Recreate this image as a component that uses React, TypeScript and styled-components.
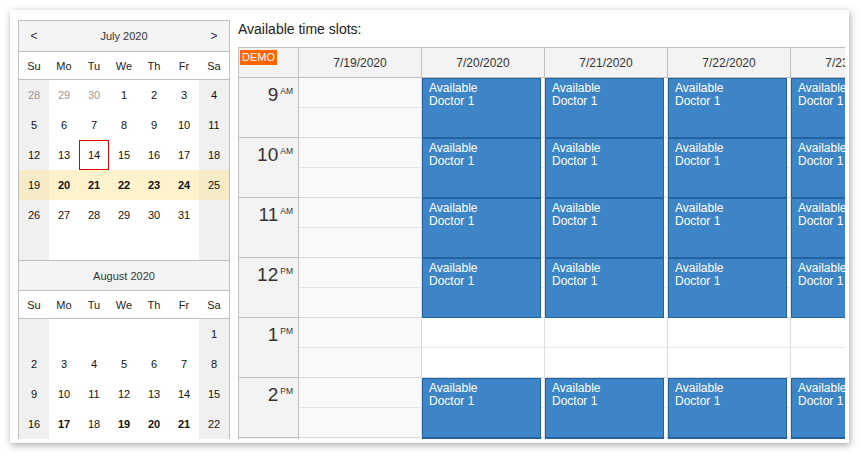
import styled, { createGlobalStyle } from 'styled-components';

const GlobalStyle = createGlobalStyle`
  html, body {
    margin: 0;
    padding: 0;
    background: #ffffff;
  }
  body {
    font-family: "Liberation Sans", Arial, sans-serif;
  }
  * {
    box-sizing: border-box;
  }
`;

const Page = styled.div`
  width: 860px;
  height: 455px;
  padding: 10px 0 0 10px;
`;

const Frame = styled.div`
  width: 839px;
  height: 433px;
  padding: 10px 4px 4px 8px;
  background: #ffffff;
  box-shadow: 1px 2px 7px rgba(0, 0, 0, 0.35);
`;

const Content = styled.div`
  display: flex;
  gap: 8px;
  width: 100%;
  height: 100%;
  overflow: hidden;
`;

/* ---------- navigator ---------- */

const Navigator = styled.div`
  flex-shrink: 0;
  align-self: flex-start;
  width: 212px;
  border: 1px solid #c0c0c0;
  color: #222;
  font-size: 11px;
`;

const MonthHeader = styled.div<{ $first?: boolean }>`
  display: grid;
  grid-template-columns: 30px 1fr 30px;
  height: 31px;
  align-items: center;
  background: #f3f3f3;
  border-top: ${(p) => (p.$first ? 'none' : '1px solid #c0c0c0')};
  border-bottom: 1px solid #c0c0c0;
  color: #333;
  text-align: center;
`;

const NavArrow = styled.span`
  font-size: 12px;
  color: #333;
`;

const DayNames = styled.div`
  display: grid;
  grid-template-columns: repeat(7, 30px);
  height: 28px;
  align-items: center;
  text-align: center;
  border-bottom: 1px solid #c0c0c0;
  background: #fff;
`;

const Weeks = styled.div`
  display: grid;
  grid-template-columns: repeat(7, 30px);
  grid-auto-rows: 30px;
`;

const DayCell = styled.div<{
  $weekend: boolean;
  $selected: boolean;
  $other?: boolean;
  $bold?: boolean;
  $today?: boolean;
}>`
  display: flex;
  align-items: center;
  justify-content: center;
  background: ${(p) =>
    p.$selected ? (p.$weekend ? '#f5ebc7' : '#fdf2cc') : p.$weekend ? '#f0f0f0' : '#ffffff'};
  color: ${(p) => (p.$other ? '#999' : '#111')};
  font-weight: ${(p) => (p.$bold ? 700 : 400)};
  border: ${(p) => (p.$today ? '1px solid #e00000' : 'none')};
`;

type Day = { d: number; other?: boolean; bold?: boolean; today?: boolean } | null;

const names = ['Su', 'Mo', 'Tu', 'We', 'Th', 'Fr', 'Sa'];

const range = (a: number, b: number, bold: number[] = []): Day[] =>
  Array.from({ length: b - a + 1 }, (_, i) => ({ d: a + i, bold: bold.includes(a + i) }));

const july: Day[][] = [
  [{ d: 28, other: true }, { d: 29, other: true }, { d: 30, other: true }, ...range(1, 4)],
  range(5, 11),
  [...range(12, 13), { d: 14, today: true }, ...range(15, 18)],
  range(19, 25, [20, 21, 22, 23, 24]),
  [...range(26, 31), null],
  [null, null, null, null, null, null, null],
];

// only the weeks that fit in the frame
const august: Day[][] = [
  [null, null, null, null, null, null, { d: 1 }],
  range(2, 8),
  range(9, 15),
  range(16, 22, [17, 19, 20, 21]),
];

const Month = ({
  title,
  weeks,
  nav,
  selectedRow,
}: {
  title: string;
  weeks: Day[][];
  nav?: boolean;
  selectedRow?: number;
}) => (
  <div>
    <MonthHeader $first={nav}>
      <NavArrow>{nav ? '<' : ''}</NavArrow>
      <span>{title}</span>
      <NavArrow>{nav ? '>' : ''}</NavArrow>
    </MonthHeader>
    <DayNames>
      {names.map((n) => (
        <span key={n}>{n}</span>
      ))}
    </DayNames>
    <Weeks>
      {weeks.map((week, r) =>
        week.map((day, c) => (
          <DayCell
            key={`${r}-${c}`}
            $weekend={c === 0 || c === 6}
            $selected={r === selectedRow}
            $other={day?.other}
            $bold={day?.bold}
            $today={day?.today}
          >
            {day ? day.d : ''}
          </DayCell>
        ))
      )}
    </Weeks>
  </div>
);

/* ---------- scheduler ---------- */

const Scheduler = styled.div`
  flex: 1;
  min-width: 0;
  display: flex;
  flex-direction: column;
`;

const Title = styled.div`
  font-size: 14px;
  line-height: 18px;
  color: #222;
  margin-bottom: 9px;
`;

const Grid = styled.div`
  display: flex;
  border-top: 1px solid #c0c0c0;
  border-left: 1px solid #c0c0c0;
`;

const Column = styled.div<{ $width: number }>`
  flex-shrink: 0;
  width: ${(p) => p.$width}px;
  display: flex;
  flex-direction: column;
`;

const HeaderCell = styled.div`
  height: 30px;
  display: flex;
  align-items: center;
  justify-content: center;
  background: #f3f3f3;
  border-right: 1px solid #c0c0c0;
  border-bottom: 1px solid #c0c0c0;
  font-size: 12px;
  color: #333;
`;

const Corner = styled(HeaderCell)`
  align-items: flex-start;
  justify-content: flex-start;
  padding: 2px 0 0 1px;
`;

const Demo = styled.span`
  background: #ff6600;
  color: #fff;
  font-size: 11px;
  line-height: 15px;
  padding: 0 2px;
`;

const HourLabel = styled.div`
  height: 60px;
  display: flex;
  justify-content: flex-end;
  align-items: flex-start;
  gap: 2px;
  padding: 6px 5px 0 0;
  background: #f3f3f3;
  border-right: 1px solid #c0c0c0;
  border-bottom: 1px solid #c0c0c0;
  color: #333;
`;

const HourNum = styled.span`
  font-size: 19px;
  line-height: 22px;
`;

const Meridiem = styled.span`
  font-size: 8.5px;
  line-height: 10px;
  margin-top: 2px;
`;

const HourCell = styled.div<{ $offHours: boolean }>`
  position: relative;
  height: 60px;
  display: flex;
  flex-direction: column;
  background: ${(p) => (p.$offHours ? '#f9f9f9' : '#ffffff')};
  border-right: 1px solid #dddddd;
`;

const Slot = styled.div<{ $hour?: boolean }>`
  height: 30px;
  border-bottom: 1px solid ${(p) => (p.$hour ? '#dadada' : '#e6e6e6')};
`;

const Event = styled.div`
  position: absolute;
  top: 0;
  left: 0;
  right: 3px;
  height: 60px;
  z-index: 1;
  padding: 3px 6px;
  background: #3d85c6;
  border: 1px solid #22629f;
  color: #fff;
  font-size: 12px;
  line-height: 13px;
  white-space: nowrap;
  overflow: hidden;
`;

const hours: [string, string][] = [
  ['9', 'AM'],
  ['10', 'AM'],
  ['11', 'AM'],
  ['12', 'PM'],
  ['1', 'PM'],
  ['2', 'PM'],
  ['3', 'PM'],
];

const days = [19, 20, 21, 22, 23, 24, 25];

const hasSlot = (day: number, hour: number) =>
  day >= 20 && day <= 24 && hours[hour][0] !== '1';

export default function App() {
  return (
    <Page>
      <GlobalStyle />
      <Frame>
        <Content>
          <Navigator>
            <Month title="July 2020" weeks={july} nav selectedRow={3} />
            <Month title="August 2020" weeks={august} />
          </Navigator>
          <Scheduler>
            <Title>Available time slots:</Title>
            <Grid>
              <Column $width={60}>
                <Corner>
                  <Demo>DEMO</Demo>
                </Corner>
                {hours.map(([n, m]) => (
                  <HourLabel key={n}>
                    <HourNum>{n}</HourNum>
                    <Meridiem>{m}</Meridiem>
                  </HourLabel>
                ))}
              </Column>
              {days.map((day) => (
                <Column $width={123} key={day}>
                  <HeaderCell>{`7/${day}/2020`}</HeaderCell>
                  {hours.map((h, i) => (
                    <HourCell key={h[0]} $offHours={day === 19 || day === 25}>
                      <Slot />
                      <Slot $hour />
                      {hasSlot(day, i) && (
                        <Event>
                          Available
                          <br />
                          Doctor 1
                        </Event>
                      )}
                    </HourCell>
                  ))}
                </Column>
              ))}
            </Grid>
          </Scheduler>
        </Content>
      </Frame>
    </Page>
  );
}
